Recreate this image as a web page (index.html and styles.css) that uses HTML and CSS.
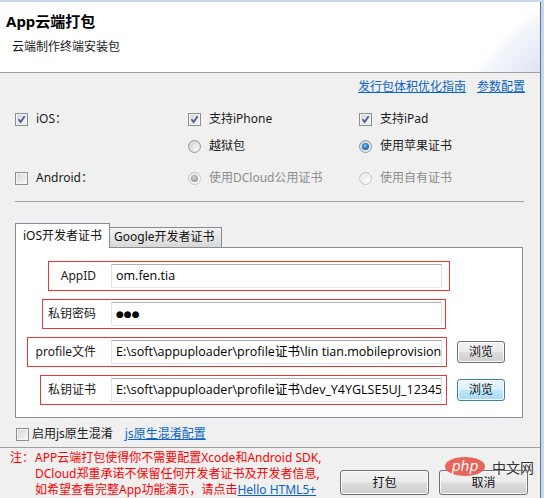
FILE: index.html
```html
<!DOCTYPE html>
<html>
<head>
<meta charset="utf-8">
<link rel="stylesheet" href="styles.css">
</head>
<body>
<div class="window">
  <div class="header">
    <div class="title">App云端打包</div>
    <div class="subtitle">云端制作终端安装包</div>
  </div>

  <div class="links"><a class="link">发行包体积优化指南</a><a class="link">参数配置</a></div>

  <div class="options">
    <div class="opt"><span class="cb"><svg width="11" height="11" viewBox="0 0 11 11"><path d="M2.5 5.2 L4.6 8 L8.6 2.2" fill="none" stroke="#3f56a4" stroke-width="1.7"/></svg></span>iOS：</div>
    <div class="opt"><span class="cb"><svg width="11" height="11" viewBox="0 0 11 11"><path d="M2.5 5.2 L4.6 8 L8.6 2.2" fill="none" stroke="#3f56a4" stroke-width="1.7"/></svg></span>支持iPhone</div>
    <div class="opt"><span class="cb"><svg width="11" height="11" viewBox="0 0 11 11"><path d="M2.5 5.2 L4.6 8 L8.6 2.2" fill="none" stroke="#3f56a4" stroke-width="1.7"/></svg></span>支持iPad</div>

    <div class="opt"></div>
    <div class="opt"><span class="rd"></span>越狱包</div>
    <div class="opt"><span class="rd on"></span>使用苹果证书</div>

    <div class="opt"><span class="cb"></span>Android：</div>
    <div class="opt dis"><span class="rd on"></span>使用DCloud公用证书</div>
    <div class="opt dis"><span class="rd"></span>使用自有证书</div>
  </div>

  <div class="sep"></div>

  <div class="tabs">
    <div class="tab active">iOS开发者证书</div>
    <div class="tab">Google开发者证书</div>
  </div>
  <div class="panel">
    <div class="frow">
      <div class="rbox b-appid"><span class="flabel">AppID</span><div class="field">om.fen.tia</div></div>
    </div>
    <div class="frow">
      <div class="rbox b-pwd"><span class="flabel">私钥密码</span><div class="field dots">●●●</div></div>
    </div>
    <div class="frow">
      <div class="rbox b-profile"><span class="flabel">profile文件</span><div class="field">E:\soft\appuploader\profile证书\lin tian.mobileprovision</div></div>
      <button class="btn browse">浏览</button>
    </div>
    <div class="frow">
      <div class="rbox b-key"><span class="flabel">私钥证书</span><div class="field">E:\soft\appuploader\profile证书\dev_Y4YGLSE5UJ_12345.p12</div></div>
      <button class="btn browse hot">浏览</button>
    </div>
  </div>

  <div class="js-row"><span class="cb"></span><span class="js-text">启用js原生混淆</span><a class="link">js原生混淆配置</a></div>

  <div class="sep-full"></div>

  <div class="footer">
    <div class="note">
      <span class="note-label">注：</span>
      <div class="note-text">APP云端打包使得你不需要配置Xcode和Android SDK,<br>DCloud郑重承诺不保留任何开发者证书及开发者信息,<br>如希望查看完整App功能演示，请点击<a class="link">Hello HTML5+</a></div>
    </div>
    <div class="actions">
      <button class="btn big">打包</button>
      <button class="btn big">取消</button>
    </div>
  </div>

  <div class="watermark"><span class="php">php</span><span class="cn">中文网</span></div>
</div>
</body>
</html>
```

FILE: styles.css
```css
* { box-sizing: border-box; }
html, body { margin: 0; }
body {
  width: 544px;
  height: 498px;
  overflow: hidden;
  background: #c4d9ef;
  padding-top: 2px;
  font-family: "Noto Sans", "Noto Sans CJK SC", sans-serif;
  font-size: 12px;
  color: #1b1b1b;
}
.window {
  position: relative;
  width: 541px;
  height: 496px;
  background: #f0f0f0;
  border-right: 1px solid #6c7480;
}
.header {
  height: 71px;
  border-bottom: 1px solid #a0a0a0;
  background: radial-gradient(circle at 650px 175px, #d3dbf0 0, #dbe2f3 150px, #e9edf8 172px, #f3f5fb 192px, #fff 205px);
}
.title {
  padding: 9px 0 0 6px;
  font-size: 15px;
  font-weight: bold;
  line-height: 20px;
  color: #000;
}
.subtitle {
  margin-top: 8px;
  padding-left: 12px;
  line-height: 16px;
  color: #1b1b1b;
}
.link {
  color: #0a64c8;
  text-decoration: underline;
}
.links {
  display: flex;
  justify-content: flex-end;
  gap: 11px;
  padding: 6px 15px 0 0;
  line-height: 16px;
}
.options {
  display: grid;
  grid-template-columns: 173px 171px auto;
  grid-template-rows: 26px 28px 36px;
  align-items: center;
  margin-top: 11px;
  padding-left: 15px;
}
.opt {
  display: flex;
  align-items: center;
  gap: 8px;
  line-height: 16px;
}
.opt.dis { color: #8d8d8d; }
.cb {
  position: relative;
  flex: none;
  display: inline-block;
  width: 13px;
  height: 13px;
  border: 1px solid #8e8f8f;
  background: linear-gradient(135deg, #d2d4d8, #f8f8f8);
  box-shadow: inset 0 0 0 1px #f4f4f4;
}
.cb svg { position: absolute; left: 0; top: 0; }
.rd {
  position: relative;
  flex: none;
  display: inline-block;
  width: 13px;
  height: 13px;
  border-radius: 50%;
  border: 1px solid #9a9a9a;
  background: radial-gradient(circle at 70% 70%, #fafafa 0, #e4e4e4 40%, #cfcfcf 100%);
}
.rd.on::after {
  content: "";
  position: absolute;
  left: 2px;
  top: 2px;
  width: 7px;
  height: 7px;
  border-radius: 50%;
  background: radial-gradient(circle at 45% 40%, #7fd3f6 0, #2a86cc 40%, #0d3b74 100%);
}
.opt.dis .rd {
  border-color: #c9c9c9;
  background: radial-gradient(circle at 70% 70%, #fdfdfd 0, #f0f0f0 50%, #e4e4e4 100%);
}
.opt.dis .rd.on::after {
  background: radial-gradient(circle at 45% 40%, #d6d6d6 0, #a8a8a8 50%, #7d7d7d 100%);
}
.sep {
  margin: 5px 16px 0 15px;
  border-top: 1px solid #a0a0a0;
}
.tabs {
  position: relative;
  z-index: 1;
  display: flex;
  align-items: flex-end;
  height: 24px;
  margin: 21px 0 0 15px;
}
.tab {
  height: 20px;
  width: 112px;
  border: 1px solid #898c95;
  border-left: none;
  border-bottom: none;
  background: linear-gradient(#f3f3f3, #e6e6e6 50%, #d7d7d7);
  padding-left: 4px;
  line-height: 18px;
  color: #111;
}
.tab.active {
  width: 95px;
  height: 25px;
  margin-bottom: -1px;
  border-left: 1px solid #898c95;
  background: #fff;
  padding: 3px 0 0 7px;
  line-height: 18px;
}
.panel {
  display: flex;
  flex-direction: column;
  gap: 8px;
  width: 508px;
  margin-left: 15px;
  padding: 13px 0 12px;
  border: 1px solid #898c95;
  background: #fff;
}
.frow {
  display: flex;
  align-items: center;
}
.rbox {
  display: flex;
  align-items: center;
  height: 30px;
  padding: 2px 0;
  border: 1px solid #ee3535;
}
.flabel {
  flex: none;
  text-align: right;
  padding-right: 15px;
  white-space: nowrap;
  line-height: 16px;
}
.b-appid { margin-left: 32px; width: 402px; }
.b-appid .flabel { width: 62px; }
.b-pwd { margin-left: 26px; width: 404px; }
.b-pwd .flabel { width: 68px; }
.b-profile { margin-left: 11px; width: 420px; }
.b-profile .flabel { width: 83px; }
.b-key { margin-left: 24px; width: 407px; }
.b-key .flabel { width: 70px; }
.field {
  flex: none;
  width: 331px;
  height: 24px;
  padding: 0 0 0 4px;
  border: 1px solid;
  border-color: #abadb3 #dbdfe6 #e3e9ef #e2e3ea;
  background: #fff;
  font-family: "Open Sans", "Noto Sans CJK SC", sans-serif;
  font-size: 12.5px;
  line-height: 22px;
  white-space: nowrap;
  overflow: hidden;
  color: #000;
}
.field.dots {
  font-family: "DejaVu Sans", sans-serif;
  font-size: 9px;
  letter-spacing: 0;
}
.btn {
  font-family: "Noto Sans", "Noto Sans CJK SC", sans-serif;
  font-size: 12px;
  color: #111;
  border: 1px solid #707070;
  border-radius: 3px;
  background: linear-gradient(#f2f2f2 0, #ebebeb 48%, #dddddd 52%, #cfcfcf 100%);
  box-shadow: inset 0 0 0 1px #fbfbfb;
  padding: 0;
  line-height: 16px;
}
.browse {
  width: 48px;
  height: 22px;
  margin-left: 10px;
}
.browse.hot {
  border-color: #3c7fb1;
  background: linear-gradient(#eaf6fd 0, #d9f0fc 48%, #bee6fd 52%, #a7d9f5 100%);
}
.js-row {
  display: flex;
  align-items: center;
  height: 20px;
  margin-top: 6px;
  padding-left: 16px;
  line-height: 16px;
}
.js-text { margin: 0 12px 0 3px; }
.sep-full {
  margin-top: 3px;
  border-top: 1px solid #a0a0a0;
}
.footer {
  display: flex;
  padding: 2px 12px 0 10px;
}
.note {
  display: flex;
  color: #ff0000;
  line-height: 16px;
  white-space: nowrap;
}
.note-label { width: 25px; flex: none; }
.actions {
  display: flex;
  gap: 10px;
  margin-left: auto;
  margin-top: 20px;
  align-self: flex-start;
}
.big {
  width: 89px;
  height: 25px;
}
.watermark {
  position: absolute;
  left: 445px;
  top: 455px;
  display: flex;
  align-items: center;
  gap: 7px;
}
.php {
  display: inline-block;
  width: 40px;
  height: 19px;
  border-radius: 50%;
  background: #e9554d;
  color: #fff;
  font-family: "DejaVu Sans", sans-serif;
  font-style: italic;
  font-size: 14px;
  line-height: 18px;
  text-align: center;
  opacity: 0.9;
}
.cn {
  font-family: "Noto Sans CJK SC", sans-serif;
  font-size: 14px;
  color: #333;
  line-height: 18px;
  text-shadow: 0 0 1px #fff;
}
```
